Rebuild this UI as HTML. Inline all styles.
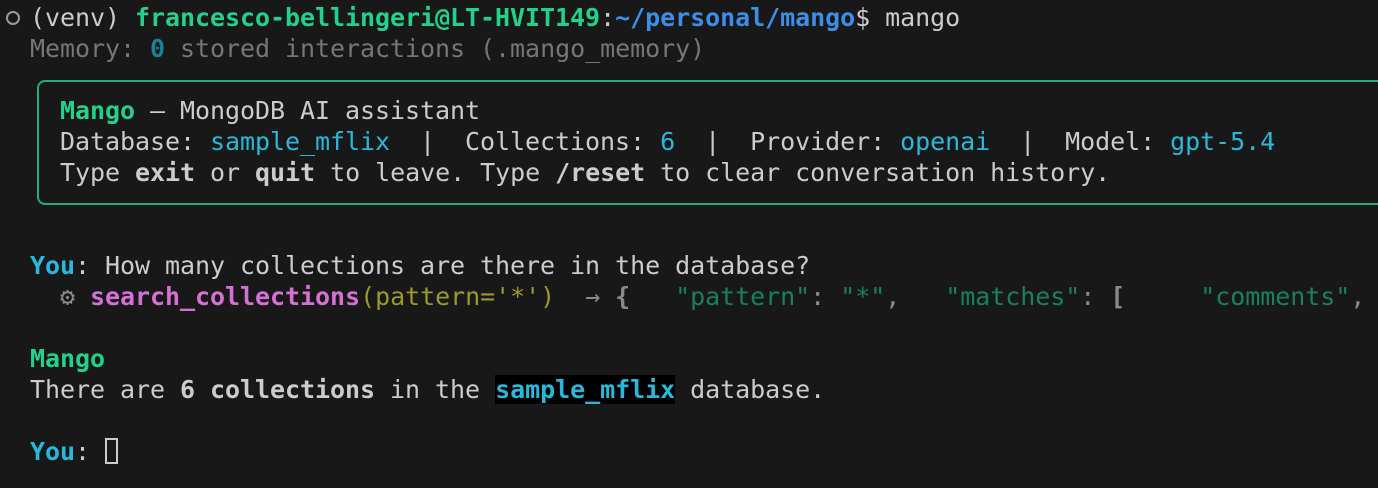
<!DOCTYPE html>
<html><head><meta charset="utf-8"><style>
html,body{margin:0;padding:0;background:#181818;width:1378px;height:488px;overflow:hidden}
.r{position:absolute;left:0;white-space:pre;font-family:"DejaVu Sans Mono","Liberation Mono",monospace;font-size:25px;line-height:31px;height:31px;color:#cccccc;letter-spacing:-0.05px}
b{font-weight:bold}
.g{color:#23d18b}.bl{color:#3b8eea}.c{color:#29b8db}.gr{color:#767676}
.m{color:#d670d6}.o{color:#999a2a}.jg{color:#16825d}.jp{color:#8a8a8a}
.box{position:absolute;left:37px;top:80px;width:1400px;height:121px;border:2px solid #1fae73;border-right:none;border-radius:8px 0 0 8px}
.circ{position:absolute;left:6px;top:11px;width:10px;height:10px;border:2px solid #9a9a9a;border-radius:50%}
.cur{position:absolute;left:105px;top:438px;width:13px;height:26px;border:2px solid #cccccc;box-sizing:border-box}
</style></head><body>
<div class="circ"></div>
<div class="r" style="top:2px;left:30px">(venv) <b class="g">francesco-bellingeri@LT-HVIT149</b>:<b class="bl">~/personal/mango</b>$ mango</div>
<div class="r gr" style="top:33px;left:30px">Memory: <b style="color:#1d7f95">0</b> stored interactions (.mango_memory)</div>
<div class="box"></div>
<div class="r" style="top:95px;left:60px"><b class="g">Mango</b> — MongoDB AI assistant</div>
<div class="r" style="top:126px;left:60px">Database: <span class="c">sample_mflix</span>  |  Collections: <span class="c">6</span>  |  Provider: <span class="c">openai</span>  |  Model: <span class="c">gpt-5.4</span></div>
<div class="r" style="top:157px;left:60px">Type <b>exit</b> or <b>quit</b> to leave. Type <b>/reset</b> to clear conversation history.</div>
<div class="r" style="top:250px;left:30px"><b class="c">You</b>: How many collections are there in the database?</div>
<div class="r" style="top:281px;left:60px"><span class="jp">⚙</span> <b class="m">search_collections</b><span class="o">(pattern='*')</span>  <span class="jp">→ <b>{</b>   <span class="jg">"pattern"</span>: <span class="jg">"*"</span>,   <span class="jg">"matches"</span>: <b>[</b>     <span class="jg">"comments"</span>,</span></div>
<div class="r" style="top:343px;left:30px"><b class="g">Mango</b></div>
<div class="r" style="top:374px;left:30px">There are <b>6 collections</b> in the <b class="c" style="background:#000">sample_mflix</b> database.</div>
<div class="r" style="top:436px;left:30px"><b class="c">You</b>: </div>
<div class="cur"></div>
</body></html>
